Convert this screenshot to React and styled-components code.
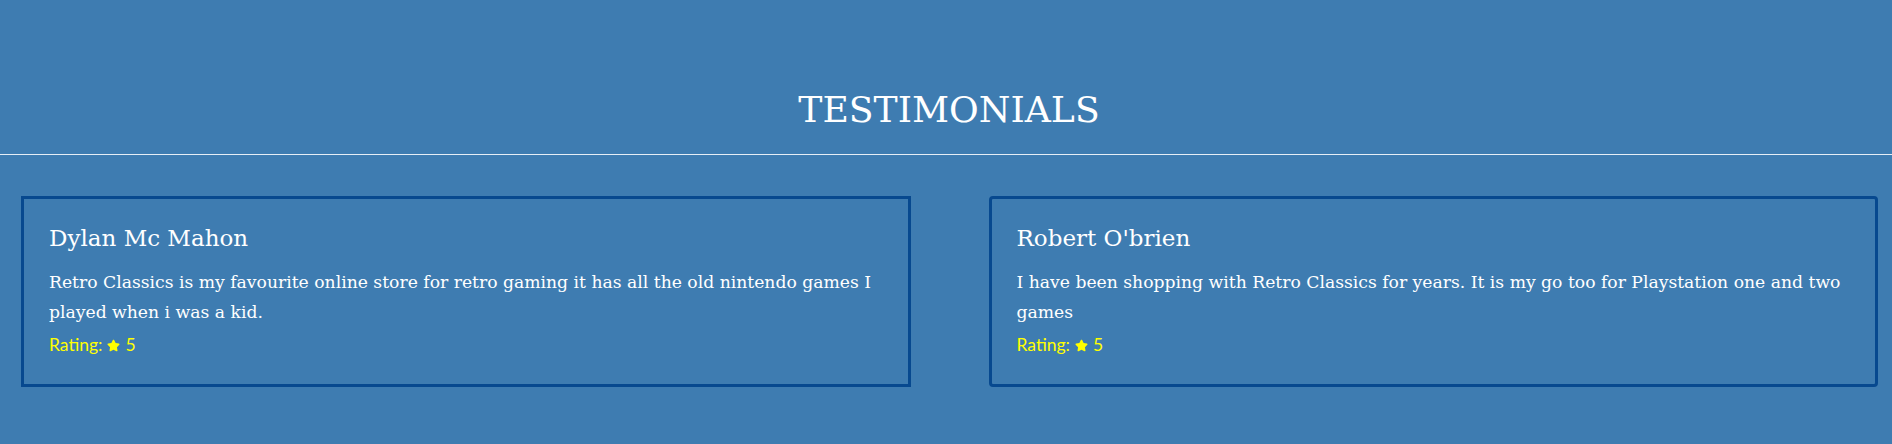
import React from "react";
import styled, { createGlobalStyle } from "styled-components";
import { FaStar } from "react-icons/fa";

const Global = createGlobalStyle`
  html, body { margin: 0; padding: 0; background: #3e7cb1; }
  * { box-sizing: border-box; }
`;

const Section = styled.section`
  background: #3e7cb1;
  min-height: 444px;
  padding-top: 86px;
  color: #ffffff;
`;

const Heading = styled.h2`
  margin: 0;
  padding-left: 6px;
  text-align: center;
  font-family: "DejaVu Serif", serif;
  font-weight: 400;
  font-size: 36.2px;
  line-height: 48px;
`;

const Rule = styled.hr`
  margin: 20px 0 0;
  border: 0;
  border-top: 1px solid #e6eef6;
  height: 0;
`;

const Cards = styled.div`
  display: flex;
  gap: 78px;
  padding: 41px 14px 0 21px;
`;

const Card = styled.article`
  flex: 1;
  border: 3px solid #07498f;
  border-radius: ${(p) => (p.$rounded ? "4px" : "0")};
  padding: 24px 25px 20px;
  min-height: 191px;
`;

const Name = styled.h3`
  margin: 0 0 15px;
  font-family: "DejaVu Serif", serif;
  font-weight: 400;
  font-size: 23px;
  line-height: 30px;
`;

const Quote = styled.p`
  margin: 0 0 6px;
  font-family: "DejaVu Serif", serif;
  font-size: 17.2px;
  line-height: 29.5px;
`;

const Rating = styled.p`
  margin: 0;
  display: flex;
  align-items: center;
  gap: 5px;
  font-family: "Lato", sans-serif;
  font-size: 17.5px;
  line-height: 24px;
  color: #ffff00;
`;

const Star = styled(FaStar)`
  width: 13px;
  height: 13px;
`;

const testimonials = [
  {
    name: "Dylan Mc Mahon",
    text: "Retro Classics is my favourite online store for retro gaming it has all the old nintendo games I played when i was a kid.",
    rating: 5,
  },
  {
    name: "Robert O'brien",
    text: "I have been shopping with Retro Classics for years. It is my go too for Playstation one and two games",
    rating: 5,
    rounded: true,
  },
];

export default function App() {
  return (
    <>
      <Global />
      <Section>
        <Heading>TESTIMONIALS</Heading>
        <Rule />
        <Cards>
          {testimonials.map((t) => (
            <Card key={t.name} $rounded={t.rounded}>
              <Name>{t.name}</Name>
              <Quote>{t.text}</Quote>
              <Rating>
                Rating: <Star /> {t.rating}
              </Rating>
            </Card>
          ))}
        </Cards>
      </Section>
    </>
  );
}
